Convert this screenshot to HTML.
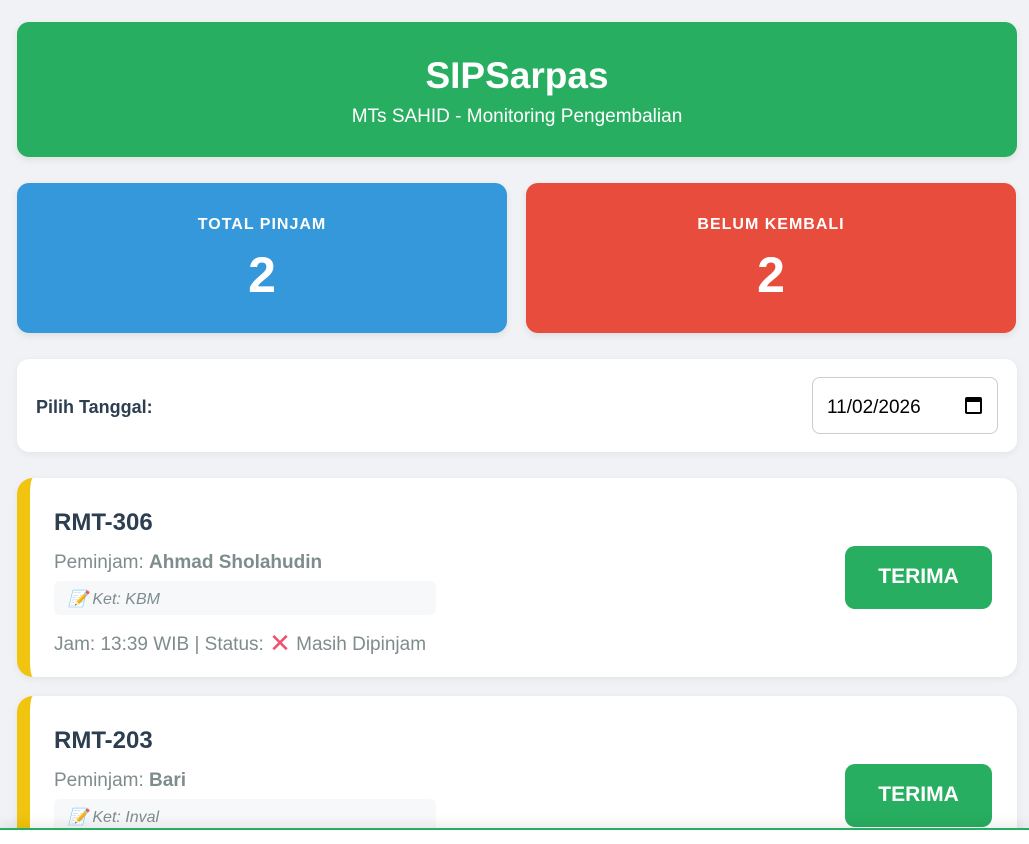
<!DOCTYPE html>
<html style="height:844px;overflow:hidden"><head><meta charset="utf-8"><style>
*{box-sizing:border-box;margin:0;padding:0}
body{width:1029px;height:844px;overflow:hidden;background:#f0f2f5;font-family:"Liberation Sans","DejaVu Sans",sans-serif;position:relative}
.hdr{position:absolute;left:17px;top:22px;width:1000px;height:135px;background:#27ae60;border-radius:12px;color:#fff;text-align:center;box-shadow:0 3px 8px rgba(0,0,0,.08)}
.hdr h1{font-size:37px;font-weight:bold;margin-top:34px;line-height:40px}
.hdr p{font-size:19px;margin-top:10px}
.st{position:absolute;top:183px;height:150px;width:490px;border-radius:12px;color:#fff;text-align:center;box-shadow:0 3px 8px rgba(0,0,0,.08)}
.st .l{font-size:16px;font-weight:bold;letter-spacing:1px;margin-top:33px}
.st .n{font-size:50px;font-weight:bold;margin-top:12px}
.date{position:absolute;left:17px;top:359px;width:1000px;height:93px;background:#fff;border-radius:12px;box-shadow:0 2px 8px rgba(0,0,0,.06)}
.date b{position:absolute;left:19px;top:38px;font-size:18px;color:#2c3e50}
.inp{position:absolute;left:795px;top:18px;width:186px;height:57px;border:1px solid #ccc;border-radius:8px;font-size:19px;color:#000;padding:19px 0 0 14px}
.cal{position:absolute;right:15px;top:19px;width:17px;height:17px;border:2px solid #000;border-top-width:5px;border-radius:2px}
.card{position:absolute;left:17px;width:1000px;height:199px;background:#fff;border-radius:16px;border-left:13px solid #f1c40f;box-shadow:0 2px 8px rgba(0,0,0,.06)}
.card h2{position:absolute;left:24px;top:31px;font-size:24px;color:#2c3e50}
.pm{position:absolute;left:24px;top:74px;font-size:19px;color:#7f8c8d}
.pm b{color:#7f8c8d}
.ket{position:absolute;left:24px;top:103px;width:382px;height:34px;background:#f7f8fa;border-radius:6px;font-style:italic;font-size:16px;color:#7f8c8d;padding:8px 0 0 14px}
.jm{position:absolute;left:24px;top:150px;font-size:19px;color:#7f8c8d}
.btn{position:absolute;left:815px;top:68px;width:147px;height:63px;background:#27ae60;border-radius:10px;color:#fff;font-weight:bold;font-size:21px;text-align:center;line-height:62px}
.x{color:#f0506e;font-weight:bold;font-size:26px;vertical-align:-2px}
.foot{position:absolute;left:0;top:828px;width:1029px;height:16px;background:#fff;border-top:2px solid #27ae60;box-shadow:0 -6px 10px rgba(0,0,0,.06);z-index:5}
</style></head><body>
<div class="hdr"><h1>SIPSarpas</h1><p>MTs SAHID - Monitoring Pengembalian</p></div>
<div class="st" style="left:17px;background:#3498db"><div class="l">TOTAL PINJAM</div><div class="n">2</div></div>
<div class="st" style="left:526px;background:#e74c3c"><div class="l">BELUM KEMBALI</div><div class="n">2</div></div>
<div class="date"><b>Pilih Tanggal:</b><div class="inp">11/02/2026<div class="cal"></div></div></div>
<div class="card" style="top:478px"><h2>RMT-306</h2><div class="pm">Peminjam: <b>Ahmad Sholahudin</b></div><div class="ket">📝 Ket: KBM</div><div class="jm">Jam: 13:39 WIB | Status: <span class="x">✕</span> Masih Dipinjam</div><div class="btn">TERIMA</div></div>
<div class="card" style="top:696px;height:148px;border-bottom-left-radius:0;border-bottom-right-radius:0"><h2>RMT-203</h2><div class="pm">Peminjam: <b>Bari</b></div><div class="ket">📝 Ket: Inval</div><div class="btn">TERIMA</div></div>
<div class="foot"></div>
</body></html>
